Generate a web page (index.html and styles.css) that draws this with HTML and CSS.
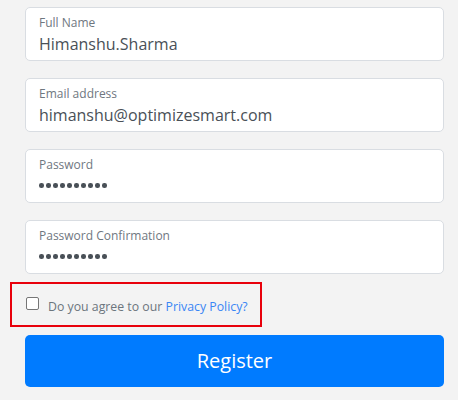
FILE: index.html
```html
<!DOCTYPE html>
<html lang="en">
<head>
<meta charset="utf-8">
<title>Register</title>
<link rel="stylesheet" href="styles.css">
</head>
<body>
<form class="form">
  <div class="field">
    <label class="field-label">Full Name</label>
    <div class="field-value">Himanshu.Sharma</div>
  </div>
  <div class="field">
    <label class="field-label">Email address</label>
    <div class="field-value">himanshu@optimizesmart.com</div>
  </div>
  <div class="field">
    <label class="field-label">Password</label>
    <div class="field-dots"><span></span><span></span><span></span><span></span><span></span><span></span><span></span><span></span><span></span><span></span></div>
  </div>
  <div class="field">
    <label class="field-label">Password Confirmation</label>
    <div class="field-dots"><span></span><span></span><span></span><span></span><span></span><span></span><span></span><span></span><span></span><span></span></div>
  </div>
  <div class="agree">
    <span class="checkbox"></span>
    <span class="agree-text">Do you agree to our <a class="agree-link" href="#">Privacy Policy?</a></span>
  </div>
  <button class="register" type="button">Register</button>
</form>
</body>
</html>
```
FILE: styles.css
```css
html, body {
  margin: 0;
  padding: 0;
  background: #f3f3f3;
}
body {
  font-family: "Open Sans", "Noto Sans", sans-serif;
  width: 458px;
  height: 400px;
  overflow: hidden;
}
.form {
  display: flex;
  flex-direction: column;
  padding: 7px 14px 0 25px;
  width: 419px;
}
.field {
  box-sizing: border-box;
  height: 54px;
  margin-bottom: 17px;
  background: #fff;
  border: 1px solid #d9dde2;
  border-radius: 5px;
  padding: 6px 14px 0 13px;
  display: flex;
  flex-direction: column;
}
.field:nth-child(4) {
  margin-bottom: 8px;
}
.field-label {
  font-size: 12px;
  line-height: 17px;
  color: #6f777f;
}
.field-value {
  font-size: 16px;
  line-height: 24px;
  color: #495057;
  margin-top: 1px;
}
.field-dots {
  display: flex;
  gap: 2.5px;
  margin-top: 10px;
}
.field-dots span {
  width: 4.5px;
  height: 4.5px;
  border-radius: 50%;
  background: #495057;
}
.agree {
  box-sizing: border-box;
  margin-left: -15px;
  width: 252px;
  height: 45px;
  border: 2px solid #e8000b;
  display: flex;
  align-items: center;
  padding-left: 14px;
  gap: 9px;
}
.checkbox {
  box-sizing: border-box;
  width: 13px;
  height: 13px;
  border: 1px solid #767676;
  border-radius: 2px;
  background: #fff;
  margin-top: -2px;
}
.agree-text {
  font-size: 12.3px;
  color: #6c757d;
  margin-top: 4px;
}
.agree-link {
  color: #3a86f5;
  text-decoration: none;
}
.register {
  margin-top: 8px;
  height: 52px;
  border: none;
  border-radius: 5px;
  background: #007bff;
  color: #fff;
  font-family: inherit;
  font-size: 20px;
  padding: 0 0 2px;
}
```
